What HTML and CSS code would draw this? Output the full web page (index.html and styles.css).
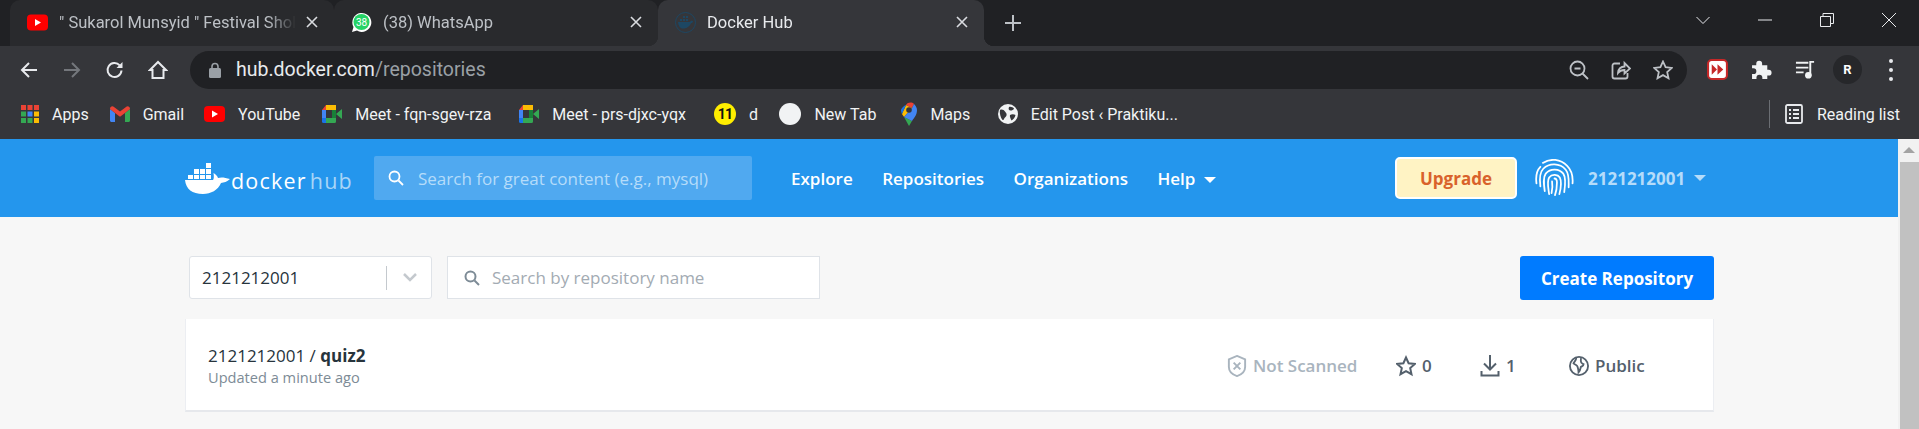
FILE: index.html
```html
<!DOCTYPE html>
<html lang="en">
<head>
  <meta charset="UTF-8">
  <title>Docker Hub</title>
  <link rel="stylesheet" href="styles.css">
</head>
<body>
  <div class="tabstrip">
    <div class="tab tab-hover">
      <svg class="favicon" viewBox="0 0 21 16"><rect width="21" height="16" rx="4" fill="#f00"/><path d="M8 4.500v7l6-3.500z" fill="#fff"/></svg>
      <span class="tab-title">" Sukarol Munsyid " Festival Sholawat</span>
      <svg class="tab-close" viewBox="0 0 12 12"><path d="M1 1l10 10M11 1L1 11"/></svg>
    </div>
    <div class="tab">
      <svg class="favicon" viewBox="0 0 21 21"><path d="M1 20l1.500-5A9.500 9.500 0 1 1 6 18.600z" fill="#fff"/><circle cx="10.500" cy="10" r="8" fill="#25d366"/><text x="10.500" y="13.500" class="wa-count">38</text></svg>
      <span class="tab-title">(38) WhatsApp</span>
      <svg class="tab-close" viewBox="0 0 12 12"><path d="M1 1l10 10M11 1L1 11"/></svg>
    </div>
    <div class="tab tab-active">
      <svg class="favicon" viewBox="0 0 21 21"><circle cx="10.500" cy="10.500" r="10" fill="none" stroke="#1d4763"/><path d="M3 10h12c.5-1 1.500-1.500 3-1 0 1-.5 2-2 2.200C14.500 15 11 16.500 8 16.500 5 16.500 3.500 14 3 10z" fill="#1d4763"/><path d="M5 7h2v2H5zM8 7h2v2H8zM11 7h2v2h-2zM8 4h2v2H8zM11 4h2v2h-2z" fill="#1d4763"/></svg>
      <span class="tab-title">Docker Hub</span>
      <svg class="tab-close" viewBox="0 0 12 12"><path d="M1 1l10 10M11 1L1 11"/></svg>
    </div>
    <svg class="new-tab" viewBox="0 0 16 16"><path d="M8 0v16M0 8h16"/></svg>
    <div class="window-btns">
      <svg viewBox="0 0 14 14"><path d="M.5 4l6.500 6.500L13.500 4"/></svg>
      <svg viewBox="0 0 14 14"><path d="M0 7h14"/></svg>
      <svg viewBox="0 0 14 14"><path d="M.5 3.500h10v10H.5zM3 3.500V.5h10.500v10h-3"/></svg>
      <svg viewBox="0 0 14 14"><path d="M0 0l14 14M14 0L0 14"/></svg>
    </div>
  </div>

  <div class="toolbar">
    <div class="nav-btns">
      <svg viewBox="0 0 20 20"><path d="M18 10H3M10 3l-7 7 7 7"/></svg>
      <svg class="dim" viewBox="0 0 20 20"><path d="M2 10h15M10 3l7 7-7 7"/></svg>
      <svg viewBox="0 0 20 20"><path d="M16.500 10.500a7 7 0 1 1-1.800-5.200"/><path class="solid" d="M17.500 2v6h-6z"/></svg>
      <svg viewBox="0 0 20 20"><path d="M2 10l8-8 8 8h-2.500v8h-11v-8z"/></svg>
    </div>
    <div class="omnibox">
      <svg class="lock" viewBox="0 0 12 16"><path d="M3 7V4.500a3 3 0 0 1 6 0V7" fill="none" stroke="#9aa0a6" stroke-width="1.600"/><rect y="6" width="12" height="10" rx="1.500" fill="#9aa0a6"/></svg>
      <span class="url">hub.docker.com<span class="url-path">/repositories</span></span>
      <div class="omni-icons">
        <svg viewBox="0 0 20 20"><circle cx="8.500" cy="8.500" r="7"/><path d="M5.500 8.500h6M13.500 13.500l5.500 5.500"/></svg>
        <svg viewBox="0 0 20 20"><path d="M9 3.500H3.500a2 2 0 0 0-2 2v11a2 2 0 0 0 2 2h11a2 2 0 0 0 2-2V13"/><path d="M7 13c0-4 3-6.500 6.500-6.500V3l5.500 5.500-5.500 5V10C11 10 8.500 11 7 13z"/></svg>
        <svg viewBox="0 0 20 20"><path d="M10 1.500l2.600 5.700 6.200.7-4.600 4.200 1.300 6.100-5.500-3.100-5.500 3.100 1.300-6.100L1.200 7.900l6.200-.7z"/></svg>
      </div>
    </div>
    <div class="ext-btns">
      <svg viewBox="0 0 20 20"><rect x="1" y="1" width="18" height="18" rx="3.500" fill="#fff" stroke="#c62828" stroke-width="2"/><path d="M4.500 5v10l5-5zM10 5v10l5.500-5z" fill="#c62828"/></svg>
      <svg viewBox="0 0 20 20"><path class="white" d="M1 6h4V4.500a2.800 2.800 0 0 1 5.600 0V6H15.500v4.200h1.300a2.800 2.800 0 0 1 0 5.600h-1.300V19H10.800v-1.300a2.800 2.800 0 0 0-5.600 0V19H1v-4.600h1.300a2.800 2.800 0 0 0 0-5.600H1z"/></svg>
      <svg viewBox="0 0 22 20"><path class="line" d="M1 3h13M1 8h13M1 13h8M16 16V2h4"/><circle class="white" cx="14" cy="16" r="3.500"/></svg>
      <div class="avatar"><span class="avatar-letter">R</span></div>
      <div class="menu-dots"><i></i><i></i><i></i></div>
    </div>
  </div>

  <div class="bookmarks">
    <div class="bm bm-apps">
      <svg viewBox="0 0 18 18"><path fill="#ea4335" d="M0 0h5v5H0zM6.500 0h5v5h-5zM13 0h5v5h-5z"/><path fill="#34a853" d="M0 6.500h5v5H0z"/><path fill="#4285f4" d="M6.500 6.500h5v5h-5z"/><path fill="#fbbc04" d="M13 6.500h5v5h-5z"/><path fill="#34a853" d="M0 13h5v5H0zM6.500 13h5v5h-5z"/><path fill="#fbbc04" d="M13 13h5v5h-5z"/></svg>
      <span>Apps</span>
    </div>
    <div class="bm bm-gmail">
      <svg viewBox="0 0 20 16"><path fill="#4285f4" d="M0 3v11.500C0 15.300.7 16 1.500 16H5V7z"/><path fill="#34a853" d="M15 7v9h3.500c.8 0 1.500-.7 1.500-1.500V3z"/><path fill="#ea4335" d="M0 3c0-2.500 2.500-3.500 4-2l6 4.500L16 1c1.500-1.500 4-.5 4 2l-5 4-5 3.800L5 7z"/></svg>
      <span>Gmail</span>
    </div>
    <div class="bm bm-youtube">
      <svg viewBox="0 0 21 16"><rect width="21" height="16" rx="4" fill="#f00"/><path d="M8 4.500v7l6-3.500z" fill="#fff"/></svg>
      <span>YouTube</span>
    </div>
    <div class="bm bm-meet">
      <svg viewBox="0 0 20 18"><path fill="#fbbc04" d="M4 0h10v5H4z"/><path fill="#ea4335" d="M4 0v5H0z"/><path fill="#4285f4" d="M0 5h4v8H0z"/><path fill="#1a73e8" d="M0 13h4v5H1.500A1.500 1.500 0 0 1 0 16.500z"/><path fill="#34a853" d="M4 13h10v3.500a1.500 1.500 0 0 1-1.500 1.500H4zM14 9l6-5v10z"/><path fill="#188038" d="M10 5h4v8h-4z"/></svg>
      <span>Meet - fqn-sgev-rza</span>
    </div>
    <div class="bm bm-meet2">
      <svg viewBox="0 0 20 18"><path fill="#fbbc04" d="M4 0h10v5H4z"/><path fill="#ea4335" d="M4 0v5H0z"/><path fill="#4285f4" d="M0 5h4v8H0z"/><path fill="#1a73e8" d="M0 13h4v5H1.500A1.500 1.500 0 0 1 0 16.500z"/><path fill="#34a853" d="M4 13h10v3.500a1.500 1.500 0 0 1-1.500 1.500H4zM14 9l6-5v10z"/><path fill="#188038" d="M10 5h4v8h-4z"/></svg>
      <span>Meet - prs-djxc-yqx</span>
    </div>
    <div class="bm bm-eleven">
      <div class="eleven">11</div>
      <span>d</span>
    </div>
    <div class="bm bm-newtab">
      <div class="blank-dot"></div>
      <span>New Tab</span>
    </div>
    <div class="bm bm-maps">
      <svg viewBox="0 0 16 24"><path fill="#34a853" d="M3 15l5 9 3-5z"/><path fill="#fbbc04" d="M1 12c.5 1 1.500 2.200 2 3l8-9-6-3z"/><path fill="#ea4335" d="M5 3l6 3 2-4C11 0 7 0 5 3z"/><path fill="#4285f4" d="M13 2l-2 4-8 9 8 4c2-3 5-6 5-11 0-2.500-1.500-4.500-3-6z"/><path fill="#1a73e8" d="M1 12L5 3C3 3.500 0 7 0 8c0 1.500.5 3 1 4z"/><circle cx="8" cy="8" r="2.800" fill="#35363a"/></svg>
      <span>Maps</span>
    </div>
    <div class="bm bm-globe">
      <svg viewBox="0 0 20 20"><circle cx="10" cy="10" r="10" fill="#f1f3f4"/><path fill="#35363a" d="M2 6c2-1 4 0 5 1.500s2 2 1.500 4-2 1.500-2.500 3.500S4 16 3 13.500 1.500 8 2 6zM11 3c2-.5 4 .5 5 1.500-.5 1.500-2 2-3.500 2S10 5 11 3zM12 11c1.500-1 4-1 5.500 0-.5 2.500-2 4.500-4 5.500-1-2-2-4-1.500-5.500z"/></svg>
      <span>Edit Post ‹ Praktiku...</span>
    </div>
    <div class="reading-list">
      <svg viewBox="0 0 18 20"><rect x="1" y="1" width="16" height="18" rx="1.500" fill="none" stroke="#e8eaed" stroke-width="1.800"/><path d="M4 6h2M8 6h6M4 10h2M8 10h6M4 14h2M8 14h6" stroke="#e8eaed" stroke-width="1.800"/></svg>
      <span>Reading list</span>
    </div>
  </div>

  <div class="viewport">
    <div class="page">
      <header class="hub-header">
        <div class="logo">
          <svg class="whale" viewBox="0 0 46 32"><path fill="#fff" d="M3 13h5v4H3zM9 13h5v4H9zM15 13h5v4h-5zM21 13h5v4h-5zM9 7h5v5H9zM15 7h5v5h-5zM21 7h5v5h-5zM21 1h5v5h-5z"/><path fill="#fff" d="M0 18h28c1-1 1-4 .5-7 2 1 4 3 4.500 5 3-1 7-.5 12 1-3 3-6 3.500-9 4-3 7-10 11-18 11C7 32 1 27 0 18z"/></svg>
          <span class="logo-docker">docker</span><span class="logo-hub">hub</span>
        </div>
        <div class="global-search">
          <svg viewBox="0 0 16 16"><circle cx="6.500" cy="6.500" r="5"/><path d="M10.500 10.500L15 15"/></svg>
          <span>Search for great content (e.g., mysql)</span>
        </div>
        <nav class="hub-nav">
          <a>Explore</a>
          <a>Repositories</a>
          <a>Organizations</a>
          <a>Help<i class="caret"></i></a>
        </nav>
        <button class="upgrade">Upgrade</button>
        <div class="user">
          <svg viewBox="0 0 40 40"><g fill="none" stroke="#fff" stroke-width="1.800" stroke-linecap="round"><path d="M1.500 25c-1-8 0-13 4-17"/><path d="M8 4c8-5 18-4 25 3 5 5 6 12 5.500 18"/><path d="M5.500 28c-1-8-1-14 3-18 6-6 17-6 23 1 4 5 3 12 3 18"/><path d="M10 33c-1-7-2-14 1-18 5-6 14-5 18 0 3 4 2 12 1 19"/><path d="M14.500 36c-1-7-2.500-13 0-17 3-4 9-3 11 0 2 4 1 11-.5 17"/><path d="M20 20c2 0 2.500 2 2.500 4 0 4-.5 9-2 13"/><path d="M17 35c1-5 1-9 .5-12"/></g></svg>
          <span>2121212001</span>
          <i class="caret"></i>
        </div>
      </header>

      <main class="content">
        <div class="filters">
          <div class="org-select">
            <span class="org-name">2121212001</span>
            <span class="org-sep"></span>
            <svg viewBox="0 0 14 9"><path d="M1 1l6 6 6-6"/></svg>
          </div>
          <div class="repo-search">
            <svg viewBox="0 0 16 16"><circle cx="6.500" cy="6.500" r="5"/><path d="M10.500 10.500L15 15"/></svg>
            <span>Search by repository name</span>
          </div>
          <button class="create-repo">Create Repository</button>
        </div>

        <div class="repo-card">
          <div class="repo-info">
            <div class="repo-name">2121212001 / <b>quiz2</b></div>
            <div class="repo-updated">Updated a minute ago</div>
          </div>
          <div class="stat stat-scan">
            <svg viewBox="0 0 20 23"><path d="M10 1l8.500 3.500v8c0 5-4 8-8.500 9.500-4.500-1.500-8.500-4.500-8.500-9.500v-8z"/><path d="M6.500 8l7 7M13.500 8l-7 7"/></svg>
            <span>Not Scanned</span>
          </div>
          <div class="stat stat-stars">
            <svg viewBox="0 0 20 20"><path d="M10 1.500l2.600 5.700 6.200.7-4.600 4.200 1.300 6.100-5.500-3.100-5.500 3.100 1.300-6.100L1.200 7.900l6.200-.7z"/></svg>
            <span>0</span>
          </div>
          <div class="stat stat-pulls">
            <svg viewBox="0 0 19 22"><path d="M9.500 0v14M3.500 8.500l6 6 6-6M1 16v4.500h17V16"/></svg>
            <span>1</span>
          </div>
          <div class="stat stat-public">
            <svg viewBox="0 0 22 22"><circle cx="11" cy="11" r="10"/><path d="M8 2c0 3-2 4-3 6 2 2 4 2 4.500 4s1 3 1 6c2-2 2-4 2.500-6 1.500-1 3-1 3-3-2-1-3-1-3-3.500s0-3 .5-3.500"/></svg>
            <span>Public</span>
          </div>
        </div>
      </main>
    </div>

    <div class="scrollbar">
      <div class="scroll-arrow"></div>
      <div class="scroll-thumb"></div>
    </div>
  </div>
</body>
</html>
```

FILE: styles.css
```css
* {
  box-sizing: border-box;
}
html, body {
  margin: 0;
  height: 100%;
  overflow: hidden;
}
body {
  display: flex;
  flex-direction: column;
  font-family: "Open Sans", sans-serif;
  background: #35363a;
}
svg {
  display: block;
  flex: none;
}

/* tab strip */
.tabstrip {
  display: flex;
  height: 46px;
  padding-left: 10px;
  font-family: Roboto, sans-serif;
  background: #202124;
  flex: none;
}
.tab {
  position: relative;
  display: flex;
  align-items: center;
  width: 324px;
  padding: 0 16px 2px 17px;
  color: #bdc1c6;
  font-size: 16.500px;
  background: #292a2d;
  border-radius: 10px 10px 0 0;
}
.tab-active {
  width: 326px;
  background: #35363a;
  color: #e8eaed;
}
.tab-active::after {
  content: "";
  position: absolute;
  right: -10px;
  bottom: 0;
  width: 10px;
  height: 10px;
  background: radial-gradient(circle at 100% 0, transparent 10px, #35363a 10.500px);
}
.tab-active::before {
  content: "";
  position: absolute;
  left: -10px;
  bottom: 0;
  width: 10px;
  height: 10px;
  background: radial-gradient(circle at 0 0, transparent 10px, #35363a 10.500px);
}
.favicon {
  width: 21px;
  height: 21px;
}
.tab-title {
  flex: 1;
  min-width: 0;
  margin-left: 11px;
  white-space: nowrap;
  overflow: hidden;
  -webkit-mask-image: linear-gradient(90deg, #000 88%, transparent);
  mask-image: linear-gradient(90deg, #000 88%, transparent);
}
.wa-count {
  font-size: 10px;
  text-anchor: middle;
  fill: #fff;
}
.tab-close {
  width: 12px;
  height: 12px;
  margin-left: 10px;
  fill: none;
  stroke: #dadce0;
  stroke-width: 1.600;
}
.new-tab {
  width: 16px;
  height: 16px;
  margin: 15px 0 0 21px;
  fill: none;
  stroke: #bdc1c6;
  stroke-width: 2;
}
.window-btns {
  display: flex;
  gap: 48px;
  margin-left: auto;
  padding: 13px 23px 0 0;
}
.window-btns svg {
  width: 14px;
  height: 14px;
  fill: none;
  stroke: #e8eaed;
  stroke-width: 1;
}

/* toolbar */
.toolbar {
  display: flex;
  align-items: center;
  height: 47px;
  flex: none;
  font-family: Roboto, sans-serif;
  background: #35363a;
}
.nav-btns {
  display: flex;
  gap: 23px;
  width: 190px;
  padding-left: 19px;
}
.nav-btns svg {
  width: 20px;
  height: 20px;
  fill: none;
  stroke: #e8eaed;
  stroke-width: 2;
}
.nav-btns .dim {
  stroke: #74777c;
}
.nav-btns .solid {
  fill: #e8eaed;
  stroke: none;
}
.omnibox {
  display: flex;
  align-items: center;
  width: 1497px;
  height: 38px;
  padding-left: 19px;
  background: #202124;
  border-radius: 19px;
}
.lock {
  width: 12px;
  height: 16px;
}
.url {
  margin-left: 15px;
  font-size: 19.500px;
  color: #e8eaed;
}
.url-path {
  color: #9aa0a6;
}
.omni-icons {
  display: flex;
  gap: 22px;
  margin-left: auto;
  padding-right: 14px;
}
.omni-icons svg {
  width: 20px;
  height: 20px;
  fill: none;
  stroke: #bdc1c6;
  stroke-width: 1.800;
}
.ext-btns {
  display: flex;
  align-items: center;
  gap: 23px;
  padding-left: 20px;
}
.ext-btns > svg {
  width: 21px;
  height: 21px;
}
.white {
  fill: #f1f3f4;
}
.line {
  fill: none;
  stroke: #f1f3f4;
  stroke-width: 2;
}
.avatar {
  display: flex;
  align-items: center;
  justify-content: center;
  width: 29px;
  height: 29px;
  margin-left: -6px;
  border-radius: 50%;
  background: #26272a;
}
.avatar-letter {
  color: #fff;
  font-size: 13px;
  font-weight: 700;
}
.menu-dots {
  display: flex;
  flex-direction: column;
  gap: 5px;
  margin-left: 4px;
}
.menu-dots i {
  width: 4px;
  height: 4px;
  border-radius: 50%;
  background: #e8eaed;
}

/* bookmarks */
.bookmarks {
  display: flex;
  align-items: center;
  height: 46px;
  flex: none;
  padding: 0 0 4px 21px;
  color: #f1f3f4;
  font-family: Roboto, sans-serif;
  font-size: 16px;
  background: #35363a;
}
.bm {
  display: flex;
  align-items: center;
  gap: 13px;
  white-space: nowrap;
}
.bm svg {
  width: 20px;
  height: 18px;
}
.bm-apps svg {
  width: 18px;
}
.bm-gmail { margin-left: 21px; }
.bm-youtube { margin-left: 20px; }
.bm-meet { margin-left: 22px; }
.bm-meet2 { margin-left: 28px; }
.bm-eleven { margin-left: 28px; }
.bm-newtab { margin-left: 21.500px; }
.bm-maps { margin-left: 25px; }
.bm-globe { margin-left: 27.500px; }
.bm-youtube svg {
  width: 21px;
  height: 16px;
}
.bm-maps svg {
  width: 16px;
  height: 24px;
}
.bm-globe svg {
  width: 20px;
  height: 20px;
}
.eleven {
  width: 22px;
  height: 22px;
  border-radius: 50%;
  background: #ffee00;
  color: #111;
  font-size: 14px;
  font-weight: 700;
  line-height: 22px;
  letter-spacing: -1px;
  text-align: center;
}
.blank-dot {
  width: 22px;
  height: 22px;
  border-radius: 50%;
  background: #f1f3f4;
}
.reading-list {
  display: flex;
  align-items: center;
  gap: 14px;
  height: 28px;
  margin-left: auto;
  padding: 0 19px 0 15px;
  border-left: 1px solid #6b6e73;
}
.reading-list svg {
  width: 18px;
  height: 20px;
}

/* page */
.viewport {
  display: flex;
  flex: 1;
  min-height: 0;
  overflow: hidden;
}
.page {
  flex: 1;
  background: #f7f7f7;
}
.scrollbar {
  display: flex;
  flex-direction: column;
  width: 21px;
  background: #f1f1f1;
}
.scroll-arrow {
  width: 0;
  margin: 8px auto 0;
  border: 6px solid transparent;
  border-top: 0;
  border-bottom: 6px solid #a3a3a3;
}
.scroll-thumb {
  flex: 1;
  margin: 9px 0 0 2px;
  background: #c1c1c1;
}
.hub-header {
  display: flex;
  align-items: center;
  height: 78px;
  padding-left: 185px;
  background: #2496ed;
}
.logo {
  display: flex;
  align-items: center;
  width: 189px;
  padding-top: 4px;
  color: #fff;
  font-size: 21.500px;
  letter-spacing: 1.200px;
}
.whale {
  width: 46px;
  height: 32px;
  margin-top: -4px;
}
.logo-hub {
  margin-left: 3px;
  color: #a8d5f7;
}
.global-search {
  display: flex;
  align-items: center;
  gap: 14px;
  width: 378px;
  height: 44px;
  padding-left: 14px;
  color: #b5dcfa;
  font-size: 17px;
  background: #50a9f0;
  border-radius: 2px;
}
.global-search svg {
  width: 16px;
  height: 16px;
  fill: none;
  stroke: #fff;
  stroke-width: 1.800;
}
.hub-nav {
  display: flex;
  align-items: center;
  gap: 29.500px;
  margin-left: 39px;
  color: #fff;
  font-size: 17px;
  font-weight: 600;
}
.caret {
  display: inline-block;
  margin-left: 9px;
  vertical-align: middle;
  border: 6px solid transparent;
  border-bottom: 0;
  border-top: 6px solid #fff;
}
.upgrade {
  width: 122px;
  height: 42px;
  margin-left: auto;
  color: #d9622b;
  font: 700 17px "Open Sans", sans-serif;
  background: #fff3c4;
  border: 2px solid #fff;
  border-radius: 5px;
}
.user {
  display: flex;
  align-items: center;
  width: 363px;
  margin-left: 18px;
  color: #b5dcfa;
  font-size: 17px;
  font-weight: 700;
}
.user svg {
  width: 39px;
  height: 39px;
  margin-right: 14px;
}
.user .caret {
  border-top-color: #b5dcfa;
}
.content {
  width: 1529px;
  margin-left: 185px;
}
.filters {
  display: flex;
  align-items: flex-start;
  margin-top: 39px;
  color: #c0c6cc;
  font-size: 17px;
}
.org-select {
  display: flex;
  align-items: center;
  width: 243px;
  height: 43px;
  margin-left: 4px;
  padding-left: 12px;
  color: #27343c;
  background: #fff;
  border: 1px solid #dfe3e8;
  border-radius: 3px;
}
.org-name {
  width: 184px;
}
.org-sep {
  width: 1px;
  height: 24px;
  background: #c4c9ce;
}
.org-select svg {
  width: 14px;
  height: 9px;
  margin-left: 16px;
  fill: none;
  stroke: #c4c9ce;
  stroke-width: 2.500;
}
.repo-search {
  display: flex;
  align-items: center;
  gap: 12px;
  width: 373px;
  height: 43px;
  margin-left: 15px;
  padding-left: 16px;
  color: #a3abb3;
  background: #fff;
  border: 1px solid #dfe3e8;
}
.repo-search svg {
  width: 16px;
  height: 16px;
  fill: none;
  stroke: #7d8b96;
  stroke-width: 2;
}
.create-repo {
  width: 194px;
  height: 44px;
  margin-left: auto;
  color: #fff;
  font: 700 17px "Open Sans", sans-serif;
  background: #007bff;
  border: 0;
  border-radius: 3px;
}
.repo-card {
  display: flex;
  align-items: center;
  height: 93px;
  margin-top: 19px;
  padding: 2px 0 0 22px;
  background: #fff;
  border: 1px solid #eceef2;
  border-top: 0;
  border-bottom: 2px solid #e6e8ec;
}
.repo-info {
  width: 1019px;
  padding-top: 2px;
}
.repo-name {
  color: #27343c;
  font-size: 17px;
  line-height: 22px;
}
.repo-updated {
  color: #7d8b96;
  font-size: 14.600px;
  line-height: 21px;
}
.stat {
  display: flex;
  align-items: center;
  gap: 6px;
  color: #54606c;
  font-size: 17px;
  font-weight: 600;
}
.stat svg {
  width: 20px;
  height: 22px;
  fill: none;
  stroke: #54606c;
  stroke-width: 2;
}
.stat-scan {
  width: 169px;
  color: #a9b4be;
}
.stat-scan svg {
  stroke: #a9b4be;
}
.stat-stars {
  width: 84px;
}
.stat-pulls {
  width: 89px;
}
```
